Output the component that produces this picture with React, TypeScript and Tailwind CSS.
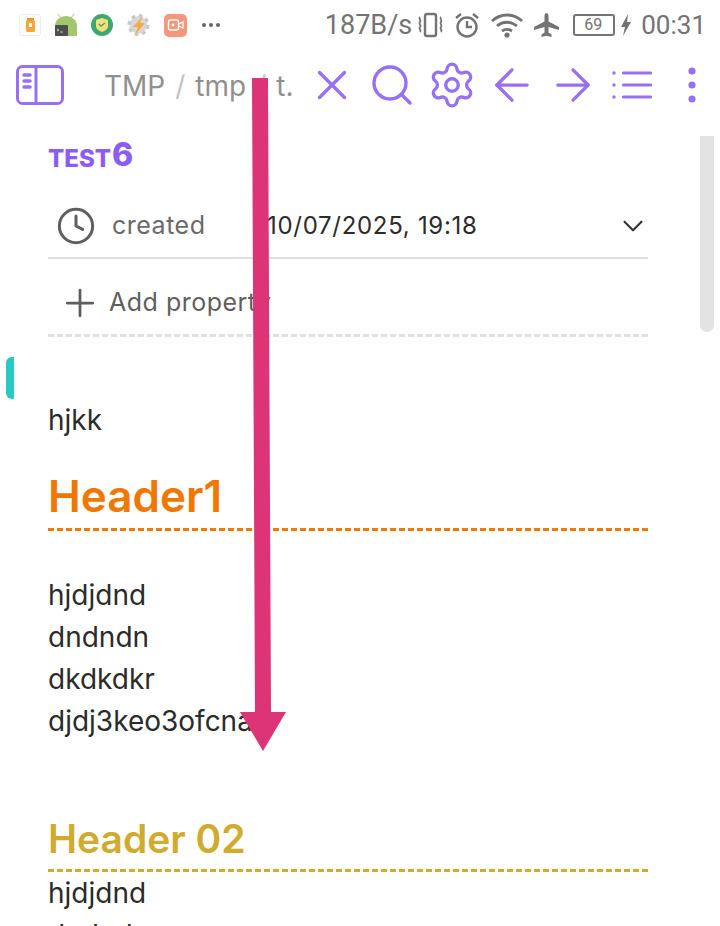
// App.tsx
// Note page on a phone: status bar, toolbar, properties block and body text,
// with a hand-drawn arrow lying over the content.

import { ArrowLeft, ArrowRight, ChevronDown, Clock, Plus, Search, Settings, X } from 'lucide-react';

const bodyLines = ['hjdjdnd', 'dndndn', 'dkdkdkr', 'djdj3keo3ofcnal'];

function AppIcons() {
  return (
    <div className="flex items-center gap-[14px]">
      <svg width="22" height="24" viewBox="0 0 22 24">
        <rect x="0.500" y="1.500" width="21" height="21" rx="2" fill="#fdfdfd" stroke="#eeeeee" />
        <rect x="7" y="7" width="9" height="12" rx="1.500" fill="#f5a63a" />
        <rect x="8" y="5" width="7" height="2" fill="#e8942a" />
        <rect x="10" y="10" width="3" height="4" fill="#fff" />
      </svg>
      <svg width="22" height="24" viewBox="0 0 22 24">
        <path d="M3 1l3 4M19 1l-3 4" stroke="#a3c76d" strokeWidth="1" />
        <path d="M0 13a11 10 0 0 1 22 0v10H0z" fill="#a3c76d" />
        <rect x="0" y="12" width="13" height="11" rx="1" fill="#4c4f4f" />
        <path d="M2 16l2 1-2 1M5 19h3" stroke="#ddd" strokeWidth="0.800" fill="none" />
      </svg>
      <svg width="22" height="24" viewBox="0 0 22 24">
        <circle cx="11" cy="12" r="11" fill="#3ea76f" />
        <path d="M5 7l6-2 6 2v6c0 3-3 5-6 6-3-1-6-3-6-6z" fill="#f4df7a" />
        <path d="M8 11l2 2 4-3" stroke="#3ea76f" strokeWidth="1.400" fill="none" />
      </svg>
      <svg width="23" height="24" viewBox="0 0 23 24">
        <circle cx="11.500" cy="12" r="9" fill="#dcdcdc" stroke="#c8c8c8" strokeWidth="4" strokeDasharray="3.500 3.570" />
        <circle cx="11.500" cy="12" r="8" fill="#d8d8d8" />
        <path d="M16 3L6 14h5l-3 8 10-12h-5z" fill="#f5ab45" />
      </svg>
      <svg width="23" height="24" viewBox="0 0 23 24">
        <rect x="0" y="1" width="23" height="23" rx="5" fill="#f4977c" />
        <rect x="4.500" y="7" width="10" height="10" rx="2" fill="none" stroke="#fff" strokeWidth="1.400" />
        <circle cx="9" cy="12" r="1.400" fill="#fff" />
        <path d="M15 11l4-2v6l-4-2" fill="none" stroke="#fff" strokeWidth="1.200" />
      </svg>
      <div className="flex items-center gap-[3px] ml-[1px]">
        <span className="w-[4px] h-[4px] rounded-full bg-[#666]" />
        <span className="w-[4px] h-[4px] rounded-full bg-[#666]" />
        <span className="w-[4px] h-[4px] rounded-full bg-[#666]" />
      </div>
    </div>
  );
}

function SystemIcons() {
  return (
    <div className="flex items-center text-[#737373] text-[26px] font-['Roboto',sans-serif]">
      <span className="mr-[5px] text-[27px]">187B/s</span>
      <svg width="27" height="26" viewBox="0 0 27 26" fill="none" stroke="#737373" className="mr-[11px]">
        <rect x="8" y="2" width="11" height="22" rx="2" strokeWidth="2.400" />
        <path d="M3 5c-2 2 2 3 0 5s2 3 0 5 2 3 0 5M24 5c-2 2 2 3 0 5s2 3 0 5 2 3 0 5" strokeWidth="1.800" />
      </svg>
      <svg width="24" height="26" viewBox="0 0 24 26" fill="none" stroke="#737373" strokeWidth="2.400" className="mr-[12px]">
        <circle cx="12" cy="15" r="9.500" />
        <path d="M12 9v6h5M1 6l5-4M23 6l-5-4" />
      </svg>
      <svg width="32" height="26" viewBox="0 0 32 26" fill="none" stroke="#737373" strokeWidth="2.800" className="mr-[11px]">
        <path d="M1 9c9-8 21-8 30 0M6 14c6-5 14-5 20 0M11 19c3-2 7-2 10 0" />
        <circle cx="16" cy="23" r="2.600" fill="#737373" stroke="none" />
      </svg>
      <svg width="25" height="24" viewBox="0 0 25 24" fill="#737373" className="mr-[14px]">
        <path d="M12.500 0c1.300 0 2 1.500 2 3v5.500L25 14v3l-10.500-3v5.500l3 2V24l-5-1.200L7.500 24v-2.500l3-2V14L0 17v-3l10.500-5.500V3c0-1.500.7-3 2-3z" />
      </svg>
      <div className="w-[42px] h-[22px] border-2 border-[#737373] rounded-[3px] flex items-center justify-center text-[16px] leading-none mr-[6px]">
        <span className="pr-[2px]">69</span>
      </div>
      <svg width="10" height="22" viewBox="0 0 10 22" fill="#737373" className="mr-[10px]">
        <path d="M7 0L0 13h4l-2 9 8-14H6z" />
      </svg>
      <span>00:31</span>
    </div>
  );
}

function SidebarIcon() {
  return (
    <svg width="48" height="40" viewBox="0 0 48 40" fill="none" stroke="#9671f5" strokeWidth="3">
      <rect x="1.500" y="1.500" width="45" height="37" rx="5" />
      <path d="M20 2v36" />
      <path d="M8 10h6M8 16h6M8 22h6" strokeWidth="3.500" strokeLinecap="round" />
    </svg>
  );
}

function OutlineIcon() {
  return (
    <svg width="40" height="28" viewBox="0 0 40 28" fill="none" stroke="#9671f5" strokeWidth="3.200" strokeLinecap="round" className="ml-[13px]">
      <path d="M12.500 2h27M12.500 14h27M12.500 26h27" transform="translate(-1 0)" />
      <circle cx="2" cy="2" r="1.700" fill="#9671f5" stroke="none" />
      <circle cx="2" cy="14" r="1.700" fill="#9671f5" stroke="none" />
      <circle cx="2" cy="26" r="1.700" fill="#9671f5" stroke="none" />
    </svg>
  );
}

function MoreIcon() {
  return (
    <svg width="8" height="36" viewBox="0 0 8 36" fill="#9671f5" className="ml-[36px]">
      <circle cx="4" cy="4" r="3.600" />
      <circle cx="4" cy="18" r="3.600" />
      <circle cx="4" cy="32" r="3.600" />
    </svg>
  );
}

export default function App() {
  return (
    <div className="relative w-[720px] h-[926px] overflow-hidden bg-white font-['Inter',sans-serif]">
      {/* status bar */}
      <div className="h-[50px] pl-[19px] pr-[14px] flex items-center justify-between">
        <AppIcons />
        <SystemIcons />
      </div>

      {/* toolbar */}
      <div className="h-[70px] pl-[16px] flex items-center text-[#9671f5]">
        <SidebarIcon />
        <div className="ml-[40px] w-[187px] pt-[1px] whitespace-nowrap text-[28px] text-[#8f8f8f]">
          TMP<span className="text-[#c4c4c4] mx-[10px]">/</span>tmp<span className="text-[#c4c4c4] mx-[10px]">/</span>t.
        </div>
        <X size={50} strokeWidth={1.600} className="ml-[16px] shrink-0" />
        <Search size={48} strokeWidth={1.700} className="ml-[11px] shrink-0" />
        <Settings size={50} strokeWidth={1.600} className="ml-[11px] shrink-0" />
        <ArrowLeft size={52} strokeWidth={1.500} className="ml-[9px] shrink-0" />
        <ArrowRight size={52} strokeWidth={1.500} className="ml-[9px] shrink-0" />
        <OutlineIcon />
        <MoreIcon />
      </div>

      {/* scrollbar and the tab on the left edge */}
      <div className="absolute left-[700px] top-[136px] w-[14px] h-[196px] bg-[#e3e3e3] rounded-b-[7px]" />
      <div className="absolute left-[6px] top-[357px] w-[8px] h-[42px] bg-[#26c9c3] rounded-l-[6px]" />

      {/* note */}
      <div className="w-[600px] ml-[48px]">
        <div className="h-[66px] pt-[4px] flex items-center font-extrabold text-[#8c5cf6] leading-none">
          <span className="text-[24px] pt-[7px]">TEST</span>
          <span className="text-[32px] ml-[1px]">6</span>
        </div>

        <div className="h-[73px] pt-[8px] flex items-center border-b-2 border-[#e0e0e0]">
          <Clock size={40} strokeWidth={1.800} className="text-[#5f5f5f] ml-[8px]" />
          <span className="ml-[16px] w-[155px] text-[25px] text-[#6a6a6a] tracking-[0.5px]">created</span>
          <span className="flex-1 text-[24px] text-[#2b2b2b] tracking-[0.7px]">10/07/2025, 19:18</span>
          <ChevronDown size={34} strokeWidth={1.500} className="text-[#333] -mr-[2px]" />
        </div>

        <div className="h-[78px] pt-[13px] flex items-center border-b-[3px] border-dashed border-[#e0e0e0] text-[#5f5f5f]">
          <Plus size={44} strokeWidth={1.500} className="ml-[10px]" />
          <span className="ml-[7px] text-[25px] tracking-[0.5px]">Add property</span>
        </div>

        <p className="mt-[62px] text-[28px] leading-[42px] text-[#2b2b2b]">hjkk</p>

        <h1 className="mt-[22px] h-[68px] flex items-center border-b-[3px] border-dashed border-[#f07800] text-[44px] font-semibold text-[#f07800]">
          Header1
        </h1>

        <div className="mt-[43px] text-[28px] leading-[42px] text-[#2b2b2b]">
          {bodyLines.map((line) => (
            <div key={line}>{line}</div>
          ))}
        </div>

        <h2 className="mt-[64px] h-[66px] pt-[3px] flex items-center border-b-[3px] border-dashed border-[#cfab2e] text-[39px] font-semibold text-[#cfab2e]">
          Header 02
        </h2>

        <div className="text-[28px] leading-[42px] text-[#2b2b2b]">
          <div>hjdjdnd</div>
          <div>dndndn</div>
        </div>
      </div>

      {/* annotation arrow drawn over the screenshot */}
      <svg className="absolute left-0 top-0" width="720" height="926" viewBox="0 0 720 926">
        <path d="M252 78h16l3 634h15l-23 39-23-39h15z" fill="#dd3377" />
      </svg>
    </div>
  );
}
